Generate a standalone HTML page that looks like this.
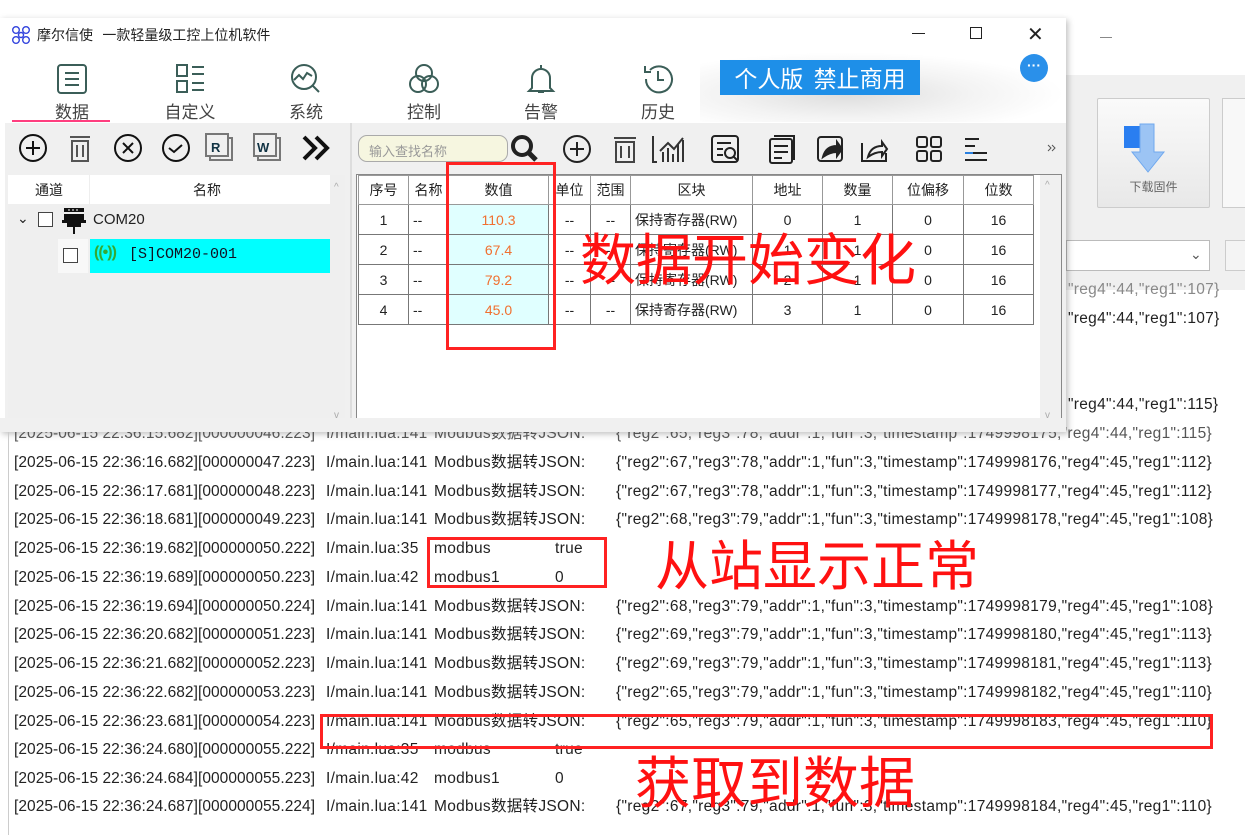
<!DOCTYPE html>
<html><head><meta charset="utf-8">
<style>
*{margin:0;padding:0;box-sizing:border-box}
body{width:1245px;height:835px;overflow:hidden;background:#fff;position:relative;font-family:"Liberation Sans","Noto Sans CJK SC",sans-serif;color:#222}
.a{position:absolute}
.log{position:absolute;left:14px;font-size:15.5px;white-space:nowrap;color:#222;letter-spacing:0.3px;line-height:18px;height:18px}
.log span{position:absolute;top:0;line-height:18px;height:18px}
.log span:first-child{letter-spacing:0.05px}
.red{position:absolute;border:3px solid #f22;}
.ann{position:absolute;color:#f11;font-family:"Noto Sans CJK SC",sans-serif;line-height:1;white-space:nowrap}
table{border-collapse:collapse;position:absolute;left:358px;top:175px;font-size:14px}
td{border:1px solid #777;height:30px;text-align:center;font-family:"Liberation Sans","Noto Sans CJK SC",sans-serif}
tr.h td{height:29px;border-color:#999}
td.v{background:#e0ffff;color:#f07030}
td.l{text-align:left;padding-left:4px}
.nav{position:absolute;top:62px;width:60px;text-align:center;font-size:17px;color:#444;font-family:"Noto Sans CJK SC",sans-serif}
.nav svg{display:block;margin:0 auto 2px}
</style></head><body>

<div class="a" style="left:1066px;top:18px;width:179px;height:272px;background:#f6f6f6"></div>
<div class="a" style="left:1066px;top:18px;width:179px;height:60px;background:#fff"></div>
<div class="a" style="left:1100px;top:37px;width:12px;height:1px;background:#888"></div>
<div class="a" style="left:1066px;top:75px;width:179px;height:215px;background:#f0f0f0"></div>
<div class="a" style="left:1097px;top:98px;width:113px;height:110px;border:1px solid #ccc;background:linear-gradient(#fafafa,#e8e8e8);border-radius:2px"></div>
<svg class="a" style="left:1120px;top:120px" width="60" height="56"><rect x="4" y="6" width="20" height="22" fill="#2a7ef0"/><path d="M20 4h14v28h10l-16 20-16-20h8z" fill="#9cc4f4" stroke="#6fa8ee"/></svg>
<div class="a" style="left:1097px;top:178px;width:113px;text-align:center;font-size:12px;color:#666">下载固件</div>
<div class="a" style="left:1222px;top:98px;width:30px;height:110px;border:1px solid #ccc;background:#f8f8f8"></div>
<div class="a" style="left:1066px;top:240px;width:144px;height:31px;border:1px solid #bbb;background:#fff"></div>
<div class="a" style="left:1190px;top:246px;font-size:14px;color:#555">⌄</div>
<div class="a" style="left:1225px;top:240px;width:30px;height:31px;border:1px solid #ccc;background:#f4f4f4"></div>

<div class="a" style="left:0;top:18px;width:1066px;height:414px;background:#fff;box-shadow:2px 2px 6px rgba(0,0,0,.25)"></div>
<svg class="a" style="left:11px;top:25px" width="22" height="20"><g fill="none" stroke="#3344dd" stroke-width="1.4"><circle cx="5" cy="5" r="3.3"/><circle cx="15" cy="5" r="3.3"/><circle cx="5" cy="15" r="3.3"/><circle cx="15" cy="15" r="3.3"/><circle cx="10" cy="10" r="2.5"/></g></svg>
<div class="a" style="left:37px;top:25px;font-size:14px;font-family:'Noto Sans CJK SC',sans-serif">摩尔信使&nbsp;&nbsp;&nbsp;一款轻量级工控上位机软件</div>
<div class="a" style="left:912px;top:33px;width:13px;height:1px;background:#222"></div>
<div class="a" style="left:970px;top:27px;width:12px;height:12px;border:1px solid #222"></div>
<div class="a" style="left:1027px;top:22px;font-size:20px;color:#222;font-weight:300">✕</div>

<div class="a" style="left:700px;top:52px;width:366px;height:70px;background:radial-gradient(ellipse at 40% 60%,#ddd 0,#f3f3f3 40%,#fff 70%)"></div>
<div class="a" style="left:720px;top:60px;width:200px;height:35px;background:#1e8fe8;color:#fff;font-size:23px;text-align:center;line-height:34px;font-family:'Noto Sans CJK SC',sans-serif">个人版&nbsp;&nbsp;禁止商用</div>
<div class="a" style="left:1020px;top:54px;width:28px;height:28px;border-radius:50%;background:#2a90ea;color:#fff;text-align:center;font-size:14px;line-height:22px;font-weight:bold">···</div>

<div class="nav" style="left:42px"><svg width="34" height="34" viewBox="0 0 34 34" fill="none" stroke="#3b5e58" stroke-width="2"><rect x="3" y="3" width="28" height="28" rx="3"/><path d="M10 11h14M10 17h14M10 23h14"/></svg>数据</div>
<div class="a" style="left:12px;top:120px;width:98px;height:2px;background:#ff3e7f"></div>
<div class="nav" style="left:160px"><svg width="34" height="34" viewBox="0 0 34 34" fill="none" stroke="#3b5e58" stroke-width="2"><rect x="4" y="3" width="10" height="11"/><rect x="4" y="19" width="10" height="11"/><path d="M19 5h12M19 12h12M19 21h12M19 28h12"/></svg>自定义</div>
<div class="nav" style="left:276px"><svg width="34" height="34" viewBox="0 0 34 34" fill="none" stroke="#3b5e58" stroke-width="2"><circle cx="15" cy="15" r="12"/><path d="M5 18l5-5 4 4 4-6 5 3M23 23l7 7"/></svg>系统</div>
<div class="nav" style="left:394px"><svg width="34" height="34" viewBox="0 0 34 34" fill="none" stroke="#3b5e58" stroke-width="2"><circle cx="17" cy="11" r="8"/><circle cx="11" cy="22" r="8"/><circle cx="23" cy="22" r="8"/></svg>控制</div>
<div class="nav" style="left:511px"><svg width="34" height="34" viewBox="0 0 34 34" fill="none" stroke="#3b5e58" stroke-width="2"><path d="M17 3v3M8 26V16a9 9 0 0118 0v10l3 3H5z M14 30h6"/></svg>告警</div>
<div class="nav" style="left:628px"><svg width="34" height="34" viewBox="0 0 34 34" fill="none" stroke="#3b5e58" stroke-width="2"><path d="M5 17a13 13 0 1 0 4-9M4 4v6h6M17 9v9h6"/></svg>历史</div>

<div class="a" style="left:5px;top:123px;width:1061px;height:309px;background:#f0f0f0"></div>
<div class="a" style="left:350px;top:123px;width:2px;height:309px;background:#ddd"></div>
<svg class="a" style="left:14px;top:130px" width="330" height="36" fill="none" stroke="#111" stroke-width="2">
<circle cx="19" cy="18" r="13"/><path d="M19 11v14M12 18h14"/>
<path d="M56 7h20M58 11h16v20h-16z M63 15v12M69 15v12" stroke="#555"/>
<circle cx="114" cy="18" r="13"/><path d="M109 13l10 10M119 13l-10 10"/>
<circle cx="162" cy="18" r="13"/><path d="M155 18l5 4 8-7"/>
<rect x="196" y="8" width="22" height="22" stroke="#777"/><rect x="192" y="4" width="22" height="22" stroke="#777" fill="#f0f0f0"/><text x="197" y="22" font-size="13" font-weight="bold" fill="#134" stroke="none" font-family="Liberation Sans">R</text>
<rect x="244" y="8" width="22" height="22" stroke="#777"/><rect x="240" y="4" width="22" height="22" stroke="#777" fill="#f0f0f0"/><text x="243" y="22" font-size="13" font-weight="bold" fill="#134" stroke="none" font-family="Liberation Sans">W</text>
<path d="M290 7l11 11-11 11M302 7l11 11-11 11" stroke-width="4"/>
</svg>
<div class="a" style="left:358px;top:135px;width:150px;height:27px;border:1px solid #aaa;border-radius:9px;background:#f6f6e0;font-size:13px;color:#999;padding:5px 10px">输入查找名称</div>
<svg class="a" style="left:508px;top:131px" width="560" height="36" fill="none" stroke="#222" stroke-width="2">
<circle cx="14" cy="15" r="9" stroke-width="4"/><path d="M21 22l7 7" stroke-width="5"/>
<circle cx="69" cy="18" r="13"/><path d="M69 11v14M62 18h14"/>
<path d="M106 7h22M108 11h18v20h-18zM113 15v12M121 15v12" stroke="#444"/>
<path d="M145 5v26h4M155 31v-10M160 31v-14M165 31v-8M170 31v-18M175 31v-22M152 20l8-8 6 6 9-11" stroke="#333"/>
<rect x="204" y="5" width="26" height="26" rx="3"/><path d="M209 12h14M209 18h6M209 24h6"/><circle cx="222" cy="22" r="5"/><path d="M226 26l4 4"/>
<rect x="262" y="8" width="22" height="24" rx="2"/><path d="M266 5h20v24M266 15h14M266 21h14M266 27h8"/>
<rect x="310" y="6" width="24" height="24" rx="3"/><path d="M315 26c2-8 7-11 14-11v-4l5 7-5 7v-4c-6 0-10 2-14 5z" fill="#222"/>
<path d="M354 12v18h24v-8M360 26c2-8 7-11 14-11v-4l5 7-5 7v-4c-6 0-10 2-14 5z" fill="none"/>
<rect x="409" y="6" width="10" height="10" rx="2"/><rect x="423" y="6" width="10" height="10" rx="2"/><rect x="409" y="20" width="10" height="10" rx="2"/><rect x="423" y="20" width="10" height="10" rx="2"/>
<path d="M457 8h14M457 15h10M457 22h22M457 29h22"/><path d="M457 22h8" stroke="#2a80e0"/>
<path d="M540 14l3 3-3 3M544 14l3 3-3 3" stroke="#555" stroke-width="1"/>
</svg>

<div class="a" style="left:8px;top:175px;width:337px;height:252px;background:#efefef"></div>
<div class="a" style="left:8px;top:175px;width:322px;height:29px;background:#fff;font-size:14px"><span class="a" style="left:27px;top:5px">通道</span><span class="a" style="left:81px;top:0;width:1px;height:29px;background:#eee"></span><span class="a" style="left:185px;top:5px">名称</span></div>
<div class="a" style="left:17px;top:210px;font-size:14px">⌄</div>
<div class="a" style="left:38px;top:212px;width:15px;height:15px;border:1px solid #444;background:#fff"></div>
<svg class="a" style="left:60px;top:206px" width="30" height="30"><rect x="4" y="2" width="20" height="4" fill="#111"/><rect x="4" y="8" width="20" height="6" fill="#111"/><rect x="2" y="14" width="24" height="3" fill="#111"/><rect x="7" y="17" width="14" height="4" fill="#111"/><rect x="13" y="21" width="2" height="7" fill="#111"/><path d="M8 4h2M12 4h2M16 4h2" stroke="#fff"/></svg>
<div class="a" style="left:93px;top:211px;font-size:15px">COM20</div>
<div class="a" style="left:58px;top:239px;width:30px;height:34px;background:#f8f8f8"></div>
<div class="a" style="left:63px;top:248px;width:15px;height:15px;border:1px solid #444;background:#fff"></div>
<div class="a" style="left:90px;top:239px;width:240px;height:34px;background:#00ffff"></div>
<div class="a" style="left:94px;top:244px;font-size:16px;color:#3a3;font-weight:bold;letter-spacing:-1px">((•))</div>
<div class="a" style="left:129px;top:246px;font-size:15px;font-family:'Liberation Mono',monospace;color:#112">[S]COM20-001</div>
<div class="a" style="left:334px;top:182px;font-size:10px;color:#aaa">^</div>
<div class="a" style="left:334px;top:410px;font-size:10px;color:#aaa">v</div>

<div class="a" style="left:356px;top:174px;width:706px;height:254px;background:#fff;border:1px solid #888"></div>
<div class="a" style="left:1040px;top:175px;width:21px;height:252px;background:#f0f0f0"></div>
<div class="a" style="left:1045px;top:180px;font-size:10px;color:#aaa">^</div>
<div class="a" style="left:1045px;top:410px;font-size:10px;color:#aaa">v</div>
<table>
<tr class="h"><td style="width:50px">序号</td><td style="width:40px">名称</td><td style="width:100px">数值</td><td style="width:42px">单位</td><td style="width:40px">范围</td><td style="width:122px">区块</td><td style="width:70px">地址</td><td style="width:70px">数量</td><td style="width:71px">位偏移</td><td style="width:70px">位数</td></tr>
<tr><td>1</td><td class="l">--</td><td class="v">110.3</td><td>--</td><td>--</td><td class="l">保持寄存器(RW)</td><td>0</td><td>1</td><td>0</td><td>16</td></tr>
<tr><td>2</td><td class="l">--</td><td class="v">67.4</td><td>--</td><td>--</td><td class="l">保持寄存器(RW)</td><td>1</td><td>1</td><td>0</td><td>16</td></tr>
<tr><td>3</td><td class="l">--</td><td class="v">79.2</td><td>--</td><td>--</td><td class="l">保持寄存器(RW)</td><td>2</td><td>1</td><td>0</td><td>16</td></tr>
<tr><td>4</td><td class="l">--</td><td class="v">45.0</td><td>--</td><td>--</td><td class="l">保持寄存器(RW)</td><td>3</td><td>1</td><td>0</td><td>16</td></tr>
</table>
<div class="red" style="left:446px;top:162px;width:110px;height:188px"></div>
<div class="ann" style="left:580px;top:229px;font-size:56px">数据开始变化</div>

<div class="log" style="left:1068px;top:281px;color:#888">"reg4":44,"reg1":107}</div>
<div class="log" style="left:1068px;top:310px">"reg4":44,"reg1":107}</div>
<div class="log" style="left:1068px;top:396px">"reg4":44,"reg1":115}</div>

<div class="log" style="top:425px;width:1230px"><span style="left:0;color:#555">[2025-06-15 22:36:15.682][000000046.223]</span><span style="left:312px;color:#555">I/main.lua:141</span><span style="left:420px;color:#555">Modbus数据转JSON:</span><span style="left:602px;color:#555">{"reg2":65,"reg3":78,"addr":1,"fun":3,"timestamp":1749998175,"reg4":44,"reg1":115}</span></div>
<div class="a" style="left:0;top:418px;width:1066px;height:14px;background:#f0f0f0"></div>

<div class="log" style="top:454px;width:1230px"><span style="left:0">[2025-06-15 22:36:16.682][000000047.223]</span><span style="left:312px">I/main.lua:141</span><span style="left:420px">Modbus数据转JSON:</span><span style="left:602px">{"reg2":67,"reg3":78,"addr":1,"fun":3,"timestamp":1749998176,"reg4":45,"reg1":112}</span></div>
<div class="log" style="top:483px;width:1230px"><span style="left:0">[2025-06-15 22:36:17.681][000000048.223]</span><span style="left:312px">I/main.lua:141</span><span style="left:420px">Modbus数据转JSON:</span><span style="left:602px">{"reg2":67,"reg3":78,"addr":1,"fun":3,"timestamp":1749998177,"reg4":45,"reg1":112}</span></div>
<div class="log" style="top:511px;width:1230px"><span style="left:0">[2025-06-15 22:36:18.681][000000049.223]</span><span style="left:312px">I/main.lua:141</span><span style="left:420px">Modbus数据转JSON:</span><span style="left:602px">{"reg2":68,"reg3":79,"addr":1,"fun":3,"timestamp":1749998178,"reg4":45,"reg1":108}</span></div>
<div class="log" style="top:540px;width:1230px"><span style="left:0">[2025-06-15 22:36:19.682][000000050.222]</span><span style="left:312px">I/main.lua:35</span><span style="left:420px">modbus</span><span style="left:541px">true</span></div>
<div class="log" style="top:569px;width:1230px"><span style="left:0">[2025-06-15 22:36:19.689][000000050.223]</span><span style="left:312px">I/main.lua:42</span><span style="left:420px">modbus1</span><span style="left:541px">0</span></div>
<div class="log" style="top:598px;width:1230px"><span style="left:0">[2025-06-15 22:36:19.694][000000050.224]</span><span style="left:312px">I/main.lua:141</span><span style="left:420px">Modbus数据转JSON:</span><span style="left:602px">{"reg2":68,"reg3":79,"addr":1,"fun":3,"timestamp":1749998179,"reg4":45,"reg1":108}</span></div>
<div class="log" style="top:626px;width:1230px"><span style="left:0">[2025-06-15 22:36:20.682][000000051.223]</span><span style="left:312px">I/main.lua:141</span><span style="left:420px">Modbus数据转JSON:</span><span style="left:602px">{"reg2":69,"reg3":79,"addr":1,"fun":3,"timestamp":1749998180,"reg4":45,"reg1":113}</span></div>
<div class="log" style="top:655px;width:1230px"><span style="left:0">[2025-06-15 22:36:21.682][000000052.223]</span><span style="left:312px">I/main.lua:141</span><span style="left:420px">Modbus数据转JSON:</span><span style="left:602px">{"reg2":69,"reg3":79,"addr":1,"fun":3,"timestamp":1749998181,"reg4":45,"reg1":113}</span></div>
<div class="log" style="top:684px;width:1230px"><span style="left:0">[2025-06-15 22:36:22.682][000000053.223]</span><span style="left:312px">I/main.lua:141</span><span style="left:420px">Modbus数据转JSON:</span><span style="left:602px">{"reg2":65,"reg3":79,"addr":1,"fun":3,"timestamp":1749998182,"reg4":45,"reg1":110}</span></div>
<div class="log" style="top:713px;width:1230px"><span style="left:0">[2025-06-15 22:36:23.681][000000054.223]</span><span style="left:312px">I/main.lua:141</span><span style="left:420px">Modbus数据转JSON:</span><span style="left:602px">{"reg2":65,"reg3":79,"addr":1,"fun":3,"timestamp":1749998183,"reg4":45,"reg1":110}</span></div>
<div class="log" style="top:741px;width:1230px"><span style="left:0">[2025-06-15 22:36:24.680][000000055.222]</span><span style="left:312px">I/main.lua:35</span><span style="left:420px">modbus</span><span style="left:541px">true</span></div>
<div class="log" style="top:770px;width:1230px"><span style="left:0">[2025-06-15 22:36:24.684][000000055.223]</span><span style="left:312px">I/main.lua:42</span><span style="left:420px">modbus1</span><span style="left:541px">0</span></div>
<div class="log" style="top:798px;width:1230px"><span style="left:0">[2025-06-15 22:36:24.687][000000055.224]</span><span style="left:312px">I/main.lua:141</span><span style="left:420px">Modbus数据转JSON:</span><span style="left:602px">{"reg2":67,"reg3":79,"addr":1,"fun":3,"timestamp":1749998184,"reg4":45,"reg1":110}</span></div>
<div class="a" style="left:8px;top:432px;width:1px;height:403px;background:#ccc"></div>

<div class="red" style="left:427px;top:537px;width:180px;height:51px"></div>
<div class="ann" style="left:655px;top:535px;font-size:54px">从站显示正常</div>
<div class="red" style="left:320px;top:714px;width:893px;height:35px"></div>
<div class="ann" style="left:635px;top:752px;font-size:56px">获取到数据</div>
</body></html>
